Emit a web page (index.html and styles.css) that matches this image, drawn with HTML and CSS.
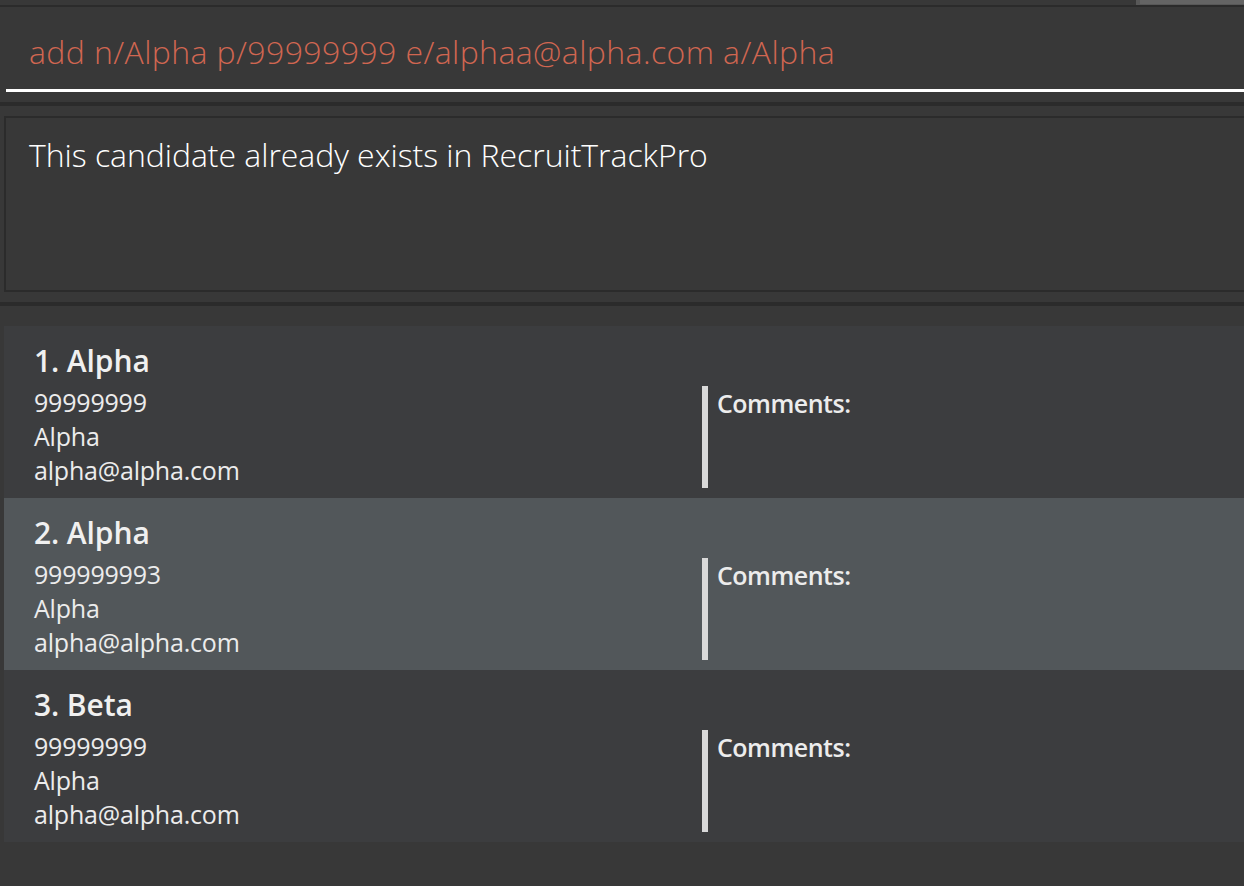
FILE: index.html
```html
<!DOCTYPE html>
<html>
<head>
<meta charset="utf-8">
<link rel="stylesheet" href="styles.css">
</head>
<body>
<div class="app">
  <div class="topbar"><div class="topbar-tab"></div></div>
  <div class="band"></div>
  <div class="command-area">
    <div class="command-field">add n/Alpha p/99999999 e/alphaa@alpha.com a/Alpha</div>
  </div>
  <div class="band band-thick"></div>
  <div class="result-area">
    <div class="result-box">This candidate already exists in RecruitTrackPro</div>
  </div>
  <div class="band band-thick"></div>
  <div class="list-area">
    <div class="list">
      <div class="cell cell-even">
        <div class="cell-main">
          <div class="cell-name">1. Alpha</div>
          <div class="cell-line">99999999</div>
          <div class="cell-line">Alpha</div>
          <div class="cell-line">alpha@alpha.com</div>
        </div>
        <div class="cell-comments">Comments:</div>
      </div>
      <div class="cell cell-odd">
        <div class="cell-main">
          <div class="cell-name">2. Alpha</div>
          <div class="cell-line">999999993</div>
          <div class="cell-line">Alpha</div>
          <div class="cell-line">alpha@alpha.com</div>
        </div>
        <div class="cell-comments">Comments:</div>
      </div>
      <div class="cell cell-even">
        <div class="cell-main">
          <div class="cell-name">3. Beta</div>
          <div class="cell-line">99999999</div>
          <div class="cell-line">Alpha</div>
          <div class="cell-line">alpha@alpha.com</div>
        </div>
        <div class="cell-comments">Comments:</div>
      </div>
    </div>
  </div>
</div>
</body>
</html>
```

FILE: styles.css
```css
html, body {
  margin: 0;
  padding: 0;
  background: #383838;
}
body {
  width: 1244px;
  height: 886px;
  overflow: hidden;
  font-family: "Open Sans", "Noto Sans", sans-serif;
}
.app {
  display: flex;
  flex-direction: column;
}
.topbar {
  height: 5px;
  display: flex;
  justify-content: flex-end;
}
.topbar-tab {
  width: 104px;
  height: 4px;
  background: #646464;
  border-left: 4px solid #585858;
  border-bottom: 1px solid #585858;
}
.band {
  height: 2px;
  background: #2b2b2b;
}
.band-thick {
  height: 4px;
}
.command-area {
  padding: 0 0 10px 6px;
}
.command-field {
  height: 85px;
  box-sizing: border-box;
  border-bottom: 3px solid #ffffff;
  padding: 25px 0 0 23px;
  font-size: 32px;
  font-weight: 300;
  letter-spacing: 0.4px;
  line-height: 40px;
  color: #d06651;
  white-space: nowrap;
}
.result-area {
  padding: 10px 0 10px 4px;
}
.result-box {
  height: 176px;
  box-sizing: border-box;
  border: 2px solid #2b2b2b;
  border-right: none;
  padding: 15px 0 0 23px;
  font-size: 32px;
  font-weight: 300;
  letter-spacing: -0.05px;
  line-height: 44px;
  color: #ffffff;
  white-space: nowrap;
}
.list-area {
  padding: 20px 0 0 4px;
}
.list {
  display: flex;
  flex-direction: column;
}
.cell {
  height: 172px;
  box-sizing: border-box;
  padding: 15px 0 9px 30px;
  display: flex;
  align-items: flex-start;
}
.cell-even {
  background: #3c3d3f;
}
.cell-odd {
  background: #52575a;
}
.cell-main {
  width: 668px;
  display: flex;
  flex-direction: column;
}
.cell-name {
  font-size: 30px;
  font-weight: 600;
  line-height: 40px;
  letter-spacing: -0.1px;
  color: #f0f0f0;
  margin-bottom: 4px;
}
.cell-line {
  font-size: 25px;
  line-height: 34px;
  letter-spacing: -0.2px;
  color: #ececec;
}
.cell-comments {
  margin-top: 45px;
  height: 102px;
  border-left: 6px solid #d9d9d9;
  padding-left: 9px;
  font-size: 25px;
  font-weight: 600;
  line-height: 34px;
  letter-spacing: -0.5px;
  color: #ececec;
}
```
